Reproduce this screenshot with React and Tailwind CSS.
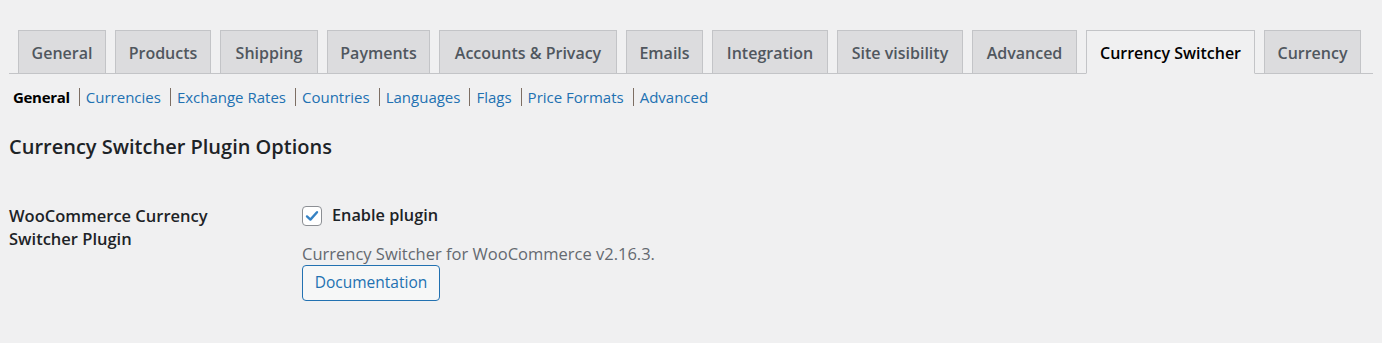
import React from "react";

const tabs = [
  { label: "General", w: "w-[88px]" },
  { label: "Products", w: "w-[96px]" },
  { label: "Shipping", w: "w-[98px]" },
  { label: "Payments", w: "w-[103px]" },
  { label: "Accounts & Privacy", w: "w-[178px]" },
  { label: "Emails", w: "w-[77px]" },
  { label: "Integration", w: "w-[116px]" },
  { label: "Site visibility", w: "w-[126px]" },
  { label: "Advanced", w: "w-[105px]" },
  { label: "Currency Switcher", w: "w-[169px]", active: true },
  { label: "Currency", w: "w-[97px]" },
];

const subs = ["Currencies", "Exchange Rates", "Countries", "Languages", "Flags", "Price Formats", "Advanced"];

export default function App() {
  return (
    <div className="w-[1382px] h-[343px] bg-[#f0f0f1] overflow-hidden font-['Open_Sans',sans-serif] text-[#3c434a]">
      <div className="mx-[9px] pt-[30px] pl-[9px] flex gap-[9px] border-b border-[#c3c4c7] h-[74px]">
        {tabs.map((t) => (
          <div
            key={t.label}
            className={
              "h-[44px] shrink-0 flex items-center justify-center border text-[16px] font-semibold whitespace-nowrap " +
              t.w +
              (t.active
                ? " bg-[#f0f0f1] border-[#c3c4c7] border-b-[#f0f0f1] text-black"
                : " bg-[#dcdcde] border-[#c3c4c7] text-[#50575e]")
            }
          >
            <span className="pt-[1px]">{t.label}</span>
          </div>
        ))}
      </div>

      <div className="flex items-center h-[20px] mt-[13px] ml-[13px] text-[15px]">
        <span className="font-bold text-black tracking-[-0.3px]">General</span>
        {subs.map((s) => (
          <React.Fragment key={s}>
            <span className="ml-[9px] mr-[6px] w-px h-[18px] bg-[#7d6e63]" />
            <span className="text-[#2271b1]">{s}</span>
          </React.Fragment>
        ))}
      </div>

      <h2 className="ml-[9px] mt-[26px] text-[20px] font-semibold text-[#1d2327] leading-[28px]">
        Currency Switcher Plugin Options
      </h2>

      <div className="flex ml-[9px] mt-[43px]">
        <div className="w-[293px] text-[16.5px] font-semibold text-[#1d2327] leading-[23px]">
          WooCommerce Currency
          <br />
          Switcher Plugin
        </div>
        <div className="flex flex-col">
          <label className="flex items-center h-[23px]">
            <span className="w-[20px] h-[20px] rounded-[4px] border border-[#8c8f94] bg-white flex items-center justify-center">
              <svg width="16" height="16" viewBox="0 0 16 16">
                <path d="M3 8.4 L6.4 11.6 L13 4.2" fill="none" stroke="#3582c4" strokeWidth="2.4" strokeLinecap="round" strokeLinejoin="round" />
              </svg>
            </span>
            <span className="ml-[10px] text-[16.3px] font-semibold text-[#1d2327]">Enable plugin</span>
          </label>
          <p className="mt-[15px] text-[16.5px] text-[#646970] leading-[23px]">
            Currency Switcher for WooCommerce v2.16.3.
          </p>
          <div className="mt-0">
            <button className="w-[138px] h-[36px] rounded-[4px] border border-[#2271b1] bg-[#f6f7f7] text-[#2271b1] text-[15.5px]">
              Documentation
            </button>
          </div>
        </div>
      </div>
    </div>
  );
}
